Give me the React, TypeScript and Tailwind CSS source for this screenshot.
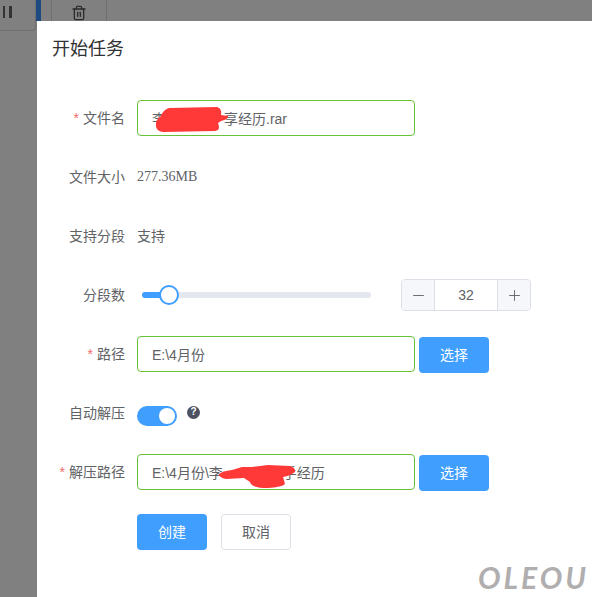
import { ReactNode } from 'react';
import { Minus, Plus, Trash2 } from 'lucide-react';

function Row({
  label,
  required,
  children,
}: {
  label: string;
  required?: boolean;
  children: ReactNode;
}) {
  return (
    <div className="flex h-9 items-center">
      <div className="w-[88px] shrink-0 text-right text-[#606266]">
        {required && <span className="mr-1 text-[#f56c6c]">*</span>}
        {label}
      </div>
      <div className="ml-3 flex min-w-0 flex-1 items-center">{children}</div>
    </div>
  );
}

function TextBox({ children }: { children: ReactNode }) {
  return (
    <div className="relative flex h-9 w-[278px] items-center whitespace-nowrap rounded border border-[#67c23a] bg-white pl-[14px] pt-px text-[#606266]">
      {children}
    </div>
  );
}

function PickButton() {
  return (
    <button className="ml-1 mt-px h-9 w-[70px] rounded bg-[#409eff] text-white">
      选择
    </button>
  );
}

export default function App() {
  return (
    <div className="flex h-[597px] w-[592px] overflow-hidden bg-[#808080] font-['Liberation_Sans','Noto_Sans_CJK_SC',sans-serif] text-sm">
      {/* dimmed page behind the dialog */}
      <div className="h-[31px] w-9 shrink-0 rounded-br border-b border-r border-[#6f6f6f]">
        <div className="ml-[3px] mt-[6px] flex h-3 gap-1">
          <div className="w-[2px] bg-[#333333]" />
          <div className="w-[3px] bg-[#333333]" />
        </div>
      </div>

      <div className="flex min-w-0 flex-1 flex-col">
        <div className="flex h-[21px] shrink-0">
          <div className="w-[5px] bg-[#1d4a80]" />
          <div className="ml-[10px] flex h-[30px] w-[56px] shrink-0 justify-center border-x border-[#6f6f6f] pt-[5px]">
            <Trash2 size={16} strokeWidth={2} color="#2d2d2d" />
          </div>
        </div>

        <div className="relative z-10 ml-px flex-1 bg-white pl-[15px] pt-4">
          <div className="h-6 text-lg leading-6 text-[#303133]">开始任务</div>

          <div className="-ml-[15px] mt-[39px] flex flex-col gap-[23px]">
            <Row label="文件名" required>
              <TextBox>
                <span>李</span>
                <span className="w-[58px]" />
                <span>享经历.rar</span>
                <svg
                  className="absolute left-[17px] top-[6px]"
                  width="74"
                  height="25"
                  viewBox="0 0 74 25"
                  fill="#ff3838"
                >
                  <path d="M14 1 L62 0 Q67 1 66 8 L73 9 Q74 12 66 14 L63 16 Q66 23 60 24 L8 25 Q1 24 1 19 Q0 13 6 9 Q8 3 14 1 Z" />
                </svg>
              </TextBox>
            </Row>

            <Row label="文件大小">
              <span className="font-['Liberation_Serif'] text-[#606266]">277.36MB</span>
            </Row>

            <Row label="支持分段">
              <span className="text-[#606266]">支持</span>
            </Row>

            <Row label="分段数">
              <div className="relative ml-[5px] h-[6px] w-[229px] rounded-full bg-[#e4e7ed]">
                <div className="h-[6px] w-[27px] rounded-l-full bg-[#409eff]" />
                <div className="absolute left-[17px] top-[-7px] size-5 rounded-full border-2 border-[#409eff] bg-white" />
              </div>
              <div className="ml-[30px] flex h-8 w-[130px] overflow-hidden rounded border border-[#dcdfe6] text-[#606266]">
                <div className="flex w-[33px] items-center justify-center border-r border-[#dcdfe6] bg-[#f5f7fa]">
                  <Minus size={17} strokeWidth={1.3} />
                </div>
                <div className="flex flex-1 items-center justify-center">32</div>
                <div className="flex w-[33px] items-center justify-center border-l border-[#dcdfe6] bg-[#f5f7fa]">
                  <Plus size={17} strokeWidth={1.3} />
                </div>
              </div>
            </Row>

            <Row label="路径" required>
              <TextBox>E:\4月份</TextBox>
              <PickButton />
            </Row>

            <Row label="自动解压">
              <div className="mt-[6px] flex h-5 w-10 items-center justify-end rounded-full bg-[#409eff] pr-[2px]">
                <div className="size-4 rounded-full bg-white" />
              </div>
              <div className="mb-px ml-[10px] flex size-[13px] items-center justify-center rounded-full bg-[#4d5262] text-[10px] font-bold text-white">
                ?
              </div>
            </Row>

            <Row label="解压路径" required>
              <TextBox>
                <span>E:\4月份\李</span>
                <span className="w-[60px]" />
                <span>手经历</span>
                <svg
                  className="absolute left-[80px] top-[10px]"
                  width="78"
                  height="23"
                  viewBox="0 0 78 23"
                  fill="#ff3838"
                >
                  <path d="M24 2 L34 2 L50 0 L72 1 Q78 3 77 7 Q72 11 65 12 L67 19 Q64 22 50 23 Q33 23 32 17 L26 13 L8 14 Q0 12 1 9 Q4 6 14 5 Z" />
                </svg>
              </TextBox>
              <PickButton />
            </Row>

            <div className="mt-px flex pl-[100px]">
              <button className="h-9 w-[70px] rounded bg-[#409eff] text-white">创建</button>
              <button className="ml-[14px] h-9 w-[70px] rounded border border-[#dcdfe6] bg-white text-[#606266]">
                取消
              </button>
            </div>
          </div>

          <div className="absolute bottom-[2px] right-[3px] font-['Lato'] text-[30px] font-bold italic leading-9 tracking-[3px] text-[#b0aeae]">
            OLEOU
          </div>
        </div>
      </div>
    </div>
  );
}
